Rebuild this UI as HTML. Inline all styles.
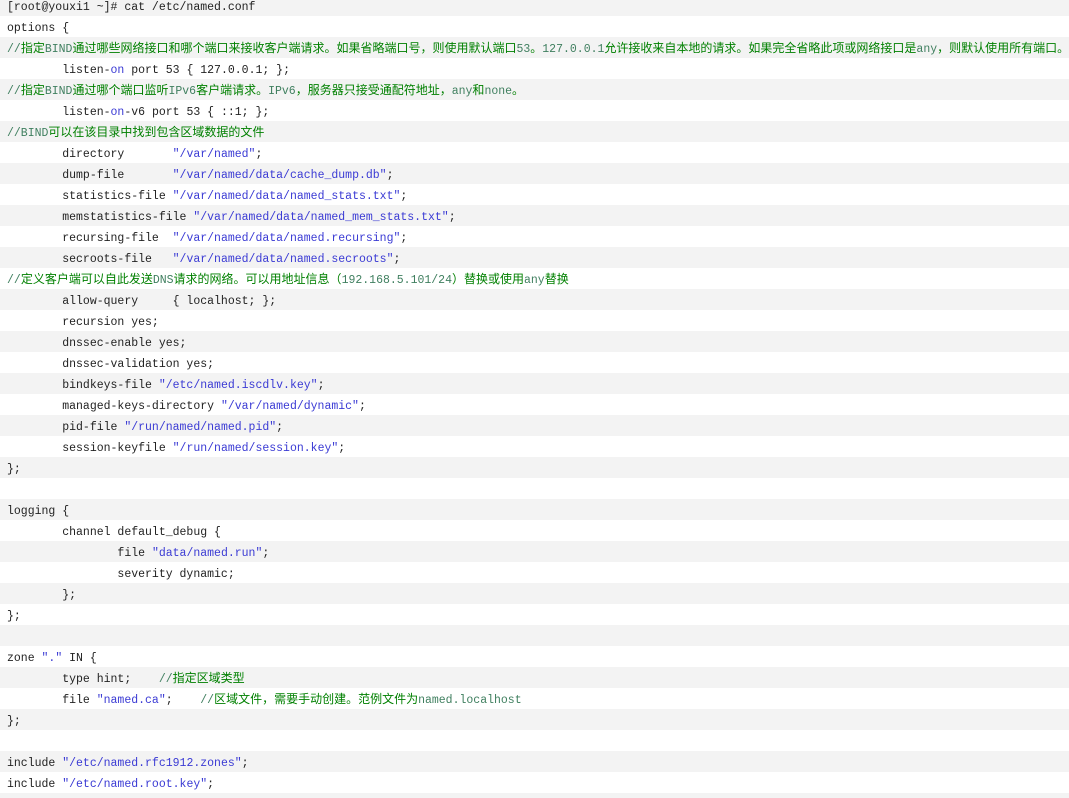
<!DOCTYPE html>
<html><head><meta charset="utf-8"><style>
html,body{margin:0;padding:0;background:#fff;overflow:hidden;}
body{width:1069px;height:798px;position:relative;}
.w{position:absolute;top:-5px;left:0;width:1069px;}
.l{box-sizing:border-box;height:21px;line-height:21px;padding-top:2px;white-space:pre;font-family:"Liberation Mono","Noto Sans CJK SC",monospace;font-size:11.5px;color:#222;padding-left:7px;overflow:hidden;}
.l:nth-child(odd){background:#f3f3f3;}
.s{color:#3a3ad4;}
.k{color:#3a3ad4;}
.c{color:#3f7f5f;}
.z{color:#008000;font-family:"Noto Sans CJK SC",sans-serif;font-size:12px;line-height:0;vertical-align:baseline;}
</style></head><body><div class="w">
<div class="l">[root@youxi1 ~]# cat /etc/named.conf</div>
<div class="l">options {</div>
<div class="l"><span class="c">//</span><span class="z">指定</span><span class="c">BIND</span><span class="z">通过哪些网络接口和哪个端口来接收客户端请求。如果省略端口号，则使用默认端口</span><span class="c">53</span><span class="z">。</span><span class="c">127.0.0.1</span><span class="z">允许接收来自本地的请求。如果完全省略此项或网络接口是</span><span class="c">any</span><span class="z">，则默认使用所有端口。</span></div>
<div class="l">        listen-<span class="k">on</span> port 53 { 127.0.0.1; };</div>
<div class="l"><span class="c">//</span><span class="z">指定</span><span class="c">BIND</span><span class="z">通过哪个端口监听</span><span class="c">IPv6</span><span class="z">客户端请求。</span><span class="c">IPv6</span><span class="z">，服务器只接受通配符地址，</span><span class="c">any</span><span class="z">和</span><span class="c">none</span><span class="z">。</span></div>
<div class="l">        listen-<span class="k">on</span>-v6 port 53 { ::1; };</div>
<div class="l"><span class="c">//BIND</span><span class="z">可以在该目录中找到包含区域数据的文件</span></div>
<div class="l">        directory       <span class="s">"/var/named"</span>;</div>
<div class="l">        dump-file       <span class="s">"/var/named/data/cache_dump.db"</span>;</div>
<div class="l">        statistics-file <span class="s">"/var/named/data/named_stats.txt"</span>;</div>
<div class="l">        memstatistics-file <span class="s">"/var/named/data/named_mem_stats.txt"</span>;</div>
<div class="l">        recursing-file  <span class="s">"/var/named/data/named.recursing"</span>;</div>
<div class="l">        secroots-file   <span class="s">"/var/named/data/named.secroots"</span>;</div>
<div class="l"><span class="c">//</span><span class="z">定义客户端可以自此发送</span><span class="c">DNS</span><span class="z">请求的网络。可以用地址信息（</span><span class="c">192.168.5.101/24</span><span class="z">）替换或使用</span><span class="c">any</span><span class="z">替换</span></div>
<div class="l">        allow-query     { localhost; };</div>
<div class="l">        recursion yes;</div>
<div class="l">        dnssec-enable yes;</div>
<div class="l">        dnssec-validation yes;</div>
<div class="l">        bindkeys-file <span class="s">"/etc/named.iscdlv.key"</span>;</div>
<div class="l">        managed-keys-directory <span class="s">"/var/named/dynamic"</span>;</div>
<div class="l">        pid-file <span class="s">"/run/named/named.pid"</span>;</div>
<div class="l">        session-keyfile <span class="s">"/run/named/session.key"</span>;</div>
<div class="l">};</div>
<div class="l"> </div>
<div class="l">logging {</div>
<div class="l">        channel default_debug {</div>
<div class="l">                file <span class="s">"data/named.run"</span>;</div>
<div class="l">                severity dynamic;</div>
<div class="l">        };</div>
<div class="l">};</div>
<div class="l"> </div>
<div class="l">zone <span class="s">"."</span> IN {</div>
<div class="l">        type hint;    <span class="c">//</span><span class="z">指定区域类型</span></div>
<div class="l">        file <span class="s">"named.ca"</span>;    <span class="c">//</span><span class="z">区域文件，需要手动创建。范例文件为</span><span class="c">named.localhost</span></div>
<div class="l">};</div>
<div class="l"> </div>
<div class="l">include <span class="s">"/etc/named.rfc1912.zones"</span>;</div>
<div class="l">include <span class="s">"/etc/named.root.key"</span>;</div>
<div class="l"> </div>
</div></body></html>
